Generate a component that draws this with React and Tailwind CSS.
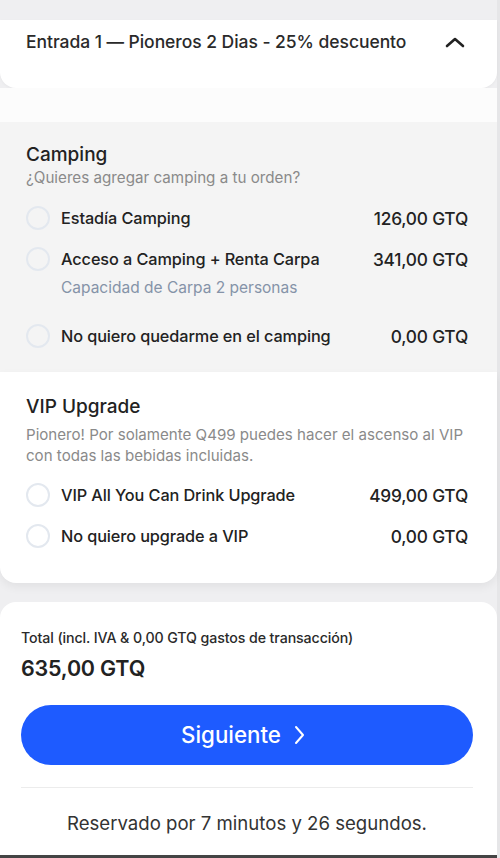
import React, { useState } from 'react';

const camping = [
  { id: 'estadia', label: 'Estadía Camping', price: '126,00 GTQ' },
  { id: 'carpa', label: 'Acceso a Camping + Renta Carpa', price: '341,00 GTQ', note: 'Capacidad de Carpa 2 personas' },
  { id: 'none', label: 'No quiero quedarme en el camping', price: '0,00 GTQ' },
];

const vip = [
  { id: 'vip', label: 'VIP All You Can Drink Upgrade', price: '499,00 GTQ' },
  { id: 'novip', label: 'No quiero upgrade a VIP', price: '0,00 GTQ' },
];

function OptionRow({ option, selected, onSelect }) {
  return (
    <button type="button" onClick={onSelect} className="flex w-full items-start text-left">
      <span className={`mt-[-2px] h-[24px] w-[24px] shrink-0 rounded-full border-2 ${selected ? 'border-[#1e5bff]' : 'border-[#e3e8ef]'}`} />
      <span className="ml-[11px] flex-1">
        <span className="block text-[16.3px] font-medium leading-[20px] tracking-[-0.1px] text-[#222]">{option.label}</span>
        {option.note && (
          <span className="mt-[10px] block text-[15.5px] leading-[18px] text-[#8593a8]">{option.note}</span>
        )}
      </span>
      <span className="mt-[1px] text-[17.3px] font-medium leading-[20px] tracking-[-0.2px] text-[#222]">{option.price}</span>
    </button>
  );
}

export default function App() {
  const [campingChoice, setCampingChoice] = useState(null);
  const [vipChoice, setVipChoice] = useState(null);

  return (
    <div className="h-[858px] w-[500px] overflow-hidden bg-[#efeff1] font-['Inter',sans-serif] text-[#222]">
      <div className="flex h-full flex-col border-r-[3px] border-[#e6e6e8]">
        <div className="h-[20px] shrink-0" />

        {/* Ticket accordion header */}
        <div className="flex h-[68px] items-start justify-between rounded-b-[16px] bg-white pl-[26px] pr-[29px] pt-[12px] shadow-[0_1px_3px_rgba(0,0,0,0.04)]">
          <span className="text-[17.5px] font-medium leading-[20px] tracking-[-0.05px] text-[#2a2a2a]">Entrada 1 — Pioneros 2 Dias - 25% descuento</span>
          <svg className="mt-[3px] mr-[2px] h-[14px] w-[22px]" viewBox="0 0 22 14" fill="none">
            <path d="M3 11 L11 4 L19 11" stroke="#222" strokeWidth="2.6" strokeLinecap="round" strokeLinejoin="round" />
          </svg>
        </div>

        <div className="h-[34px] shrink-0 bg-[#fcfcfc]" />

        {/* Camping */}
        <div className="bg-[#f4f4f4] pl-[26px] pr-[29px] pt-[21px] pb-[24px]">
          <h3 className="text-[19px] font-medium leading-[24px] text-[#222]">Camping</h3>
          <p className="mt-[2px] text-[15.2px] leading-[18px] text-[#8a8a8a]">¿Quieres agregar camping a tu orden?</p>
          <div className="mt-[21px] flex flex-col gap-[19px]">
            {camping.map((o, i) => (
              <div key={o.id} className={i === 2 ? 'mt-[10px]' : ''}>
                <OptionRow option={o} selected={campingChoice === o.id} onSelect={() => setCampingChoice(o.id)} />
              </div>
            ))}
          </div>
        </div>

        {/* VIP */}
        <div className="rounded-b-[16px] bg-white pl-[26px] pr-[29px] pt-[23px] pb-[35px] shadow-[0_4px_10px_rgba(0,0,0,0.06)]">
          <h3 className="text-[19px] font-medium leading-[24px] text-[#222]">VIP Upgrade</h3>
          <p className="mt-[5px] text-[15.1px] leading-[21px] text-[#8a8a8a]">
            Pionero! Por solamente Q499 puedes hacer el ascenso al VIP con todas las bebidas incluidas.
          </p>
          <div className="mt-[19px] flex flex-col gap-[19px]">
            {vip.map((o) => (
              <OptionRow key={o.id} option={o} selected={vipChoice === o.id} onSelect={() => setVipChoice(o.id)} />
            ))}
          </div>
        </div>

        <div className="h-[19px] shrink-0" />

        {/* Summary */}
        <div className="flex-1 rounded-t-[16px] bg-white px-[21px] pr-[24px] pt-[27px]">
          <p className="text-[14.2px] font-medium leading-[18px] tracking-[-0.1px] text-[#2a2a2a]">Total (incl. IVA &amp; 0,00 GTQ gastos de transacción)</p>
          <p className="mt-[8px] text-[21.5px] font-semibold leading-[26px] tracking-[-0.2px] text-[#222]">635,00 GTQ</p>
          <button type="button" className="mt-[24px] flex h-[60px] w-full items-center justify-center gap-[13px] rounded-full bg-[#1e5bff] pr-[8px] text-white">
            <span className="text-[22.3px] font-medium">Siguiente</span>
            <svg className="h-[20px] w-[11px]" viewBox="0 0 11 20" fill="none">
              <path d="M2 2 L9 10 L2 18" stroke="#fff" strokeWidth="2" strokeLinecap="round" strokeLinejoin="round" />
            </svg>
          </button>
          <div className="mt-[22px] border-t border-[#ececec]" />
          <p className="mt-[23px] text-center text-[18.6px] leading-[24px] text-[#333]">Reservado por 7 minutos y 26 segundos.</p>
        </div>

        <div className="h-[3px] shrink-0 bg-[#444]" />
      </div>
    </div>
  );
}
